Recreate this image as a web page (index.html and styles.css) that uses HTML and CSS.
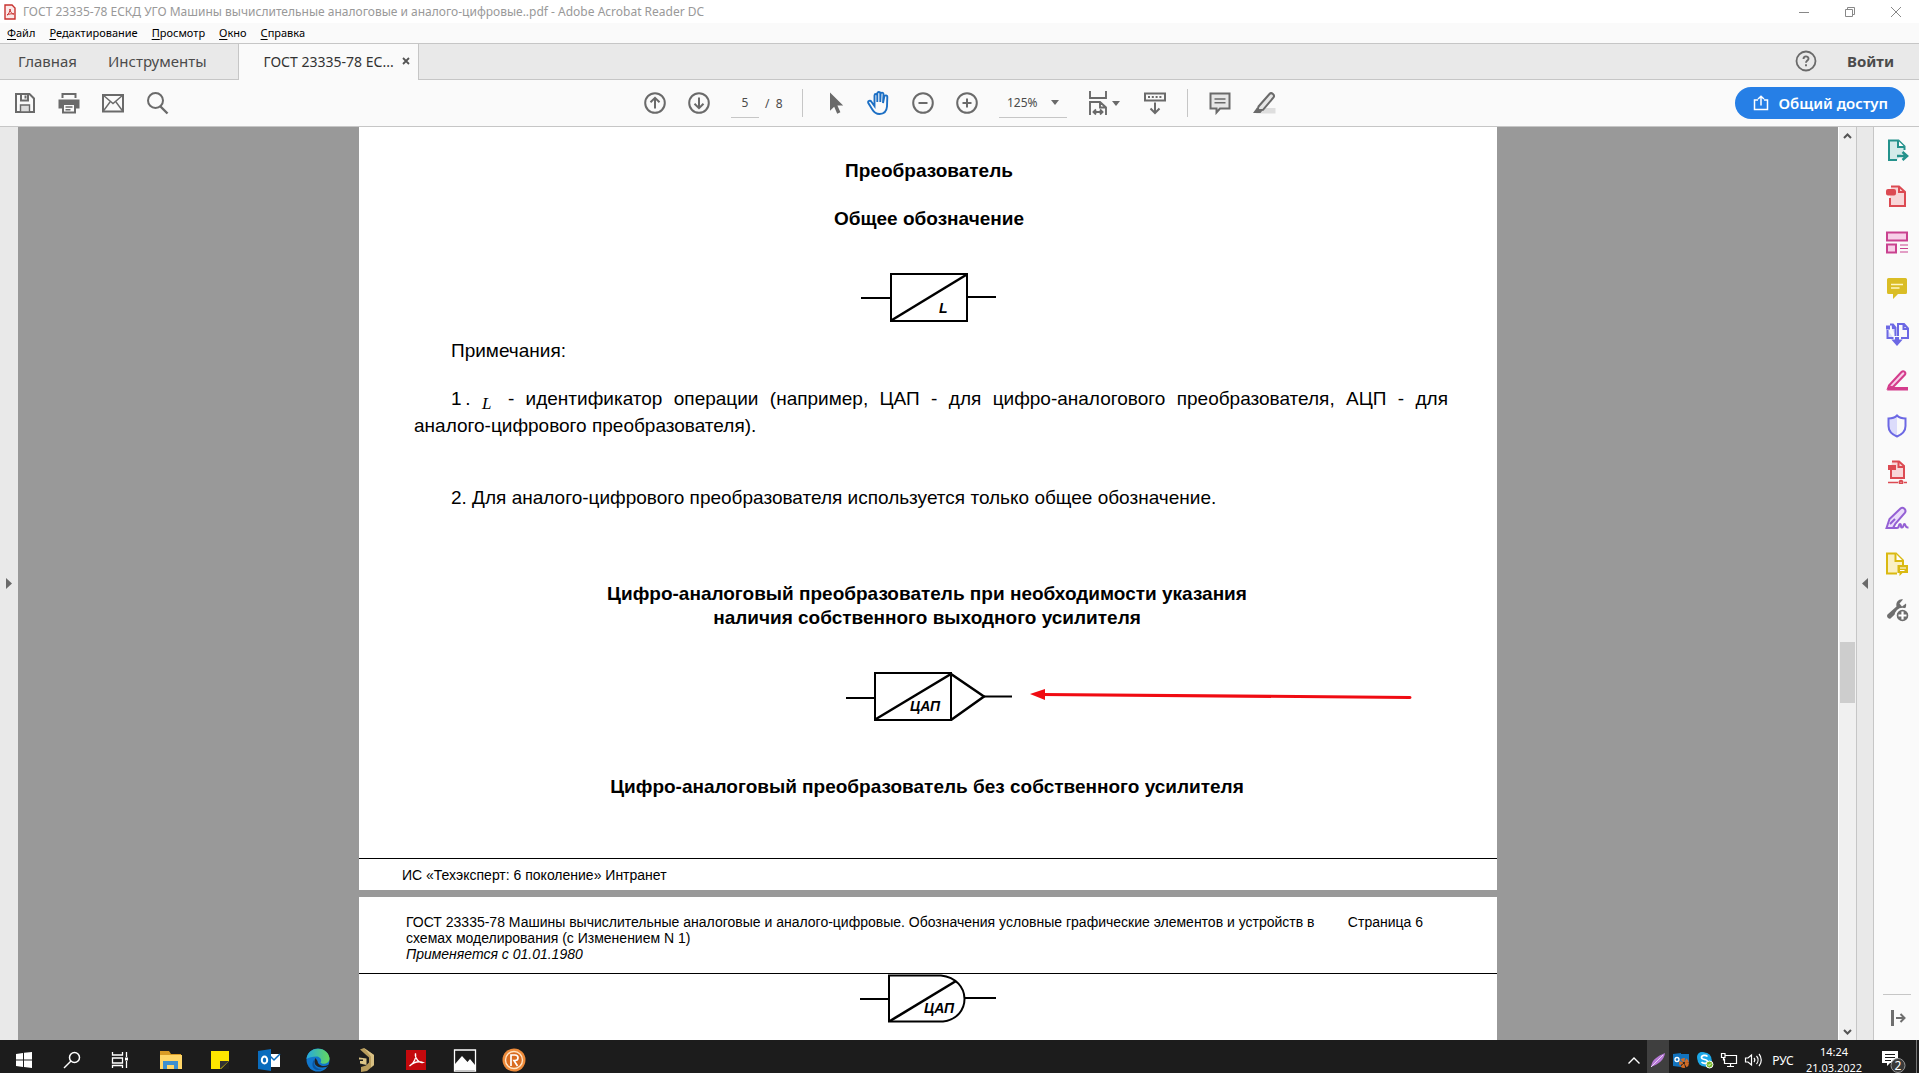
FILE: index.html
```html
<!DOCTYPE html>
<html lang="ru">
<head>
<meta charset="utf-8">
<title>ГОСТ 23335-78 - Adobe Acrobat Reader DC</title>
<link rel="stylesheet" href="styles.css">
</head>
<body>
<header class="titlebar">
  <svg class="app-icon" width="12" height="16" viewBox="0 0 12 16"><path d="M1 1h7l3 3v11H1z" fill="#fbe9e9" stroke="#c8322f" stroke-width="1.4"/><path d="M3 11c2-1 3-4 3-6 0 3 2 5 4 5-3-.5-5 0-7 1z" fill="none" stroke="#c8322f"/></svg>
  <h1 class="title">ГОСТ 23335-78 ЕСКД УГО Машины вычислительные аналоговые и аналого-цифровые..pdf - Adobe Acrobat Reader DC</h1>
  <div class="window-buttons">
    <button aria-label="Свернуть"><svg width="12" height="12" viewBox="0 0 12 12"><path d="M1 6.5h10"/></svg></button>
    <button aria-label="Восстановить"><svg width="12" height="12" viewBox="0 0 12 12"><path d="M1.500 3.500h7v7h-7zM3.500 3.500v-2h7v7h-2"/></svg></button>
    <button aria-label="Закрыть"><svg width="12" height="12" viewBox="0 0 12 12"><path d="M1 1l10 10M11 1L1 11"/></svg></button>
  </div>
</header>
<nav class="menubar">
  <button><u>Ф</u>айл</button>
  <button><u>Р</u>едактирование</button>
  <button><u>П</u>росмотр</button>
  <button><u>О</u>кно</button>
  <button><u>С</u>правка</button>
</nav>
<nav class="tabs">
  <button class="tab">Главная</button>
  <button class="tab tab-tools">Инструменты</button>
  <div class="tab-doc"><button class="tab-name">ГОСТ 23335-78 ЕС...</button><button class="tab-close" aria-label="Закрыть вкладку"><svg width="8" height="8" viewBox="0 0 8 8"><path d="M1 1l6 6M7 1L1 7" stroke="#555" stroke-width="1.800"/></svg></button></div>
  <button class="help" aria-label="Справка"><svg width="22" height="22" viewBox="0 0 22 22"><circle cx="11" cy="11" r="9.500" fill="none" stroke="#6a6a6a" stroke-width="1.800"/><path d="M8.500 9c0-3.500 5-3.300 5-.3 0 1.800-2.500 2-2.500 4.100M11 14.300v2" fill="none" stroke="#6a6a6a" stroke-width="1.900"/></svg></button>
  <button class="login">Войти</button>
</nav>
<div class="toolbar">
  <div class="tools">
    <button class="tool" aria-label="Сохранить"><svg viewBox="0 0 24 24"><path d="M3 3h13.500L21 7.500V21H3z"/><path d="M8 3v6.500h7V3M12.500 4.500v3"/><path d="M7.500 21v-7h9v7z" fill="#ddd" stroke-width="1.400"/></svg></button>
    <button class="tool" aria-label="Печать"><svg viewBox="0 0 24 24"><path d="M5.500 7V3h13v4"/><path d="M1.500 8.500h21v9h-21z" fill="#6a6a6a" stroke="none"/><path d="M6 13h12v8.500H6z" fill="#fbfbfb"/><path d="M8.500 16h7M8.500 18.700h5" stroke-width="1.400"/></svg></button>
    <button class="tool" aria-label="Отправить"><svg viewBox="0 0 24 24"><path d="M2 4h20v16.500H2z"/><path d="M2 4l10 8.500L22 4M2 20.500l7-9.500M22 20.500L15 11" stroke-width="1.400"/></svg></button>
    <button class="tool" aria-label="Найти"><svg viewBox="0 0 24 24"><circle cx="10.500" cy="9.500" r="7.500"/><path d="M15.500 15.500l7 7" stroke-width="2.400"/></svg></button>
  </div>
  <div class="tools center">
    <button class="tool" aria-label="Предыдущая страница"><svg viewBox="0 0 24 24"><circle cx="12" cy="12" r="9.800"/><path d="M12 17.500V7M7.500 11.300L12 6.800l4.500 4.500"/></svg></button>
    <button class="tool" aria-label="Следующая страница"><svg viewBox="0 0 24 24"><circle cx="12" cy="12" r="9.800"/><path d="M12 6.500V17M7.500 12.700l4.500 4.500 4.500-4.500"/></svg></button>
    <input class="page-no" type="text" value="5" aria-label="Номер страницы">
    <span class="page-count">/&nbsp; 8</span>
    <span class="divider"></span>
    <button class="tool" aria-label="Выделение"><svg viewBox="0 0 24 24"><path d="M7 1.500v18.300l4.200-4 3 6.900 3.200-1.500-3-6.700h5.800z" fill="#6a6a6a" stroke="none"/></svg></button>
    <button class="tool hand" aria-label="Рука"><svg viewBox="0 0 24 24"><path d="M7.500 13V4.500c0-2 2.800-2 2.800 0V11 2.500c0-2 3-2 3 0V11l.3-8c.2-2 3-1.800 2.900.2L16 12l1.300-6.500c.6-1.800 3.300-1.300 3 .7L20 15.500c-.4 5-3.500 7.500-7.500 7.500-3.500 0-5.500-1.500-7.500-5L1.300 12c-.8-2 1.800-3 3.100-1.300L7.500 15z" stroke-width="1.900"/></svg></button>
    <button class="tool" aria-label="Уменьшить"><svg viewBox="0 0 24 24"><circle cx="12" cy="12" r="9.800"/><path d="M7.500 12h9"/></svg></button>
    <button class="tool" aria-label="Увеличить"><svg viewBox="0 0 24 24"><circle cx="12" cy="12" r="9.800"/><path d="M7.500 12h9M12 7.500v9"/></svg></button>
    <div class="zoom"><select aria-label="Масштаб"><option>125%</option></select><svg width="8" height="5" viewBox="0 0 8 5"><path d="M0 0h8L4 5z" fill="#6a6a6a"/></svg></div>
    <button class="tool fit" aria-label="По ширине"><svg viewBox="0 0 24 24"><path d="M4 0v7h16V0M4 24V11h10l6 5.500V24M14 11v5.500h6M8 21h8M10 18.500L7.500 21l2.500 2.500M14 18.500l2.500 2.500-2.500 2.500" stroke-width="1.900"/></svg><svg class="caret" viewBox="0 0 8 5"><path d="M0 0h8L4 5z" fill="#6a6a6a" stroke="none"/></svg></button>
    <button class="tool" aria-label="Прокрутка"><svg viewBox="0 0 24 24"><path d="M2 2.500h20v7H2z"/><path d="M5 6h14" stroke-dasharray="2 1.800"/><path d="M12 11.500v10M7.500 17.500L12 22l4.500-4.500"/></svg></button>
    <span class="divider"></span>
    <button class="tool" aria-label="Комментарий"><svg viewBox="0 0 24 24"><path d="M2.500 2.500h19v15H12L8.500 21.500v-4h-6z" fill="#e6e6e6"/><path d="M6.500 8h11M6.500 11.800h11" stroke-width="1.500"/></svg></button>
    <button class="tool" aria-label="Выделить текст"><svg viewBox="0 0 24 24"><path d="M8 17h15.500v5.500H4z" fill="#dedede" stroke="none"/><path d="M6.500 15.500L17.500 3c2-2.200 5.800 1 4 3.500L11 18.800l-5.500.7z" fill="#e6e6e6"/><path d="M1 22l4-5.500 5 3.500-1.500 2z" fill="#6a6a6a" stroke="none"/></svg></button>
  </div>
  <button class="share"><svg width="16" height="16" viewBox="0 0 16 16"><path d="M5 5H1.500v9.500h13V5H11M8 10.500V1.500M5 4l3-2.800L11 4" fill="none" stroke="#fff" stroke-width="1.500"/></svg>Общий доступ</button>
</div>
<main class="workspace">
  <button class="rail rail-left" aria-label="Открыть панель навигации"><svg width="6" height="11" viewBox="0 0 6 11"><path d="M0 0v11l6-5.500z" fill="#6a6a6a"/></svg></button>
  <div class="canvas">
    <article class="page first">
      <div class="content">
        <h2>Преобразователь</h2>
        <h2>Общее обозначение</h2>
        <figure><svg width="136" height="52" viewBox="0 0 136 52"><path d="M30 2h76v47H30zM0 26h30M106 25h29"/><path d="M31 48L105 3" stroke-width="2.600"/><text x="78" y="41" font-size="14">L</text></svg></figure>
        <p class="lead">Примечания:</p>
        <p>1&thinsp;. <i class="var">L</i> - идентификатор операции (например, ЦАП - для цифро-аналогового преобразователя, АЦП - для <span class="whole">аналого-цифрового</span> преобразователя).</p>
        <p class="second">2. Для аналого-цифрового преобразователя используется только общее обозначение.</p>
        <h2 class="wide">Цифро-аналоговый преобразователь при необходимости указания<br>наличия собственного выходного усилителя</h2>
        <figure class="amp"><svg width="166" height="52" viewBox="0 0 166 52"><path d="M29 2h76v47H29zM0 27h29M138 25.500h28"/><path d="M30 48L105 3l33 22.500L105 49" stroke-width="2.500"/><text x="64" y="40" font-size="14">ЦАП</text></svg>
          <svg class="pointer" width="382" height="12" viewBox="0 0 382 12"><path d="M12 5.500L380 8.500" stroke="#f00b12" stroke-width="3" stroke-linecap="round"/><path d="M0 5L15 0v11z" fill="#f00b12" stroke="none"/></svg>
        </figure>
        <h2 class="wide">Цифро-аналоговый преобразователь без собственного усилителя</h2>
      </div>
      <footer class="page-foot">ИС «Техэксперт: 6 поколение» Интранет</footer>
    </article>
    <article class="page">
      <header class="page-head">
        <p>ГОСТ 23335-78 Машины вычислительные аналоговые и аналого-цифровые. Обозначения условные графические элементов и устройств в<br>схемах моделирования (с Изменением N 1)<br><i>Применяется с 01.01.1980</i></p>
        <p>Страница 6</p>
      </header>
      <figure class="half"><svg width="136" height="50" viewBox="0 0 136 50"><path d="M29 1.500h52C112 5 112 44 83 47.500H29zM0 25h29M105 24h31"/><path d="M30 47L96 7" stroke-width="2.600"/><text x="64" y="39" font-size="14">ЦАП</text></svg></figure>
    </article>
  </div>
  <div class="scrollbar">
    <svg width="9" height="6" viewBox="0 0 9 6"><path d="M1 5l3.500-3.500L8 5" fill="none" stroke="#555" stroke-width="2"/></svg>
    <div class="track"><div class="thumb"></div></div>
    <svg width="9" height="6" viewBox="0 0 9 6"><path d="M1 1l3.500 3.500L8 1" fill="none" stroke="#555" stroke-width="2"/></svg>
  </div>
  <button class="rail rail-right" aria-label="Скрыть панель инструментов"><svg width="6" height="11" viewBox="0 0 6 11"><path d="M6 0v11L0 5.500z" fill="#6a6a6a"/></svg></button>
  <aside class="panel">
    <button aria-label="Экспорт PDF"><svg viewBox="0 0 24 24" stroke="#24928c"><path d="M12 22H4V2.500h9.500l6 6V12" fill="#d3ebe9"/><path d="M13 2.500V9h6.500" fill="#fff"/><path d="M12 18h8M17.500 14l4.500 4-4.500 4" stroke-width="2.600"/></svg></button>
    <button aria-label="Создать PDF"><svg viewBox="0 0 24 24" stroke="#dc4a52"><path d="M5 14v8h15V8l-6-5.500H6" fill="#f8d6d8"/><path d="M14 2.500V8h6"/><rect x="2" y="6" width="8" height="4.500" rx="1" fill="#dc4a52"/></svg></button>
    <button aria-label="Систематизировать"><svg viewBox="0 0 24 24" stroke="#c9428f"><path d="M2 2.500h20v8H2zM2 14.500h9v8H2z" fill="#f8cfe8"/><path d="M15 15h8M15 18.500h8M15 22h8" stroke-width="1.200"/></svg></button>
    <button aria-label="Комментарий"><svg viewBox="0 0 24 24" stroke="none"><path d="M3.500 2h17a1.500 1.500 0 0 1 1.500 1.500v13a1.500 1.500 0 0 1-1.500 1.500H13l-5 5v-5H3.500A1.500 1.500 0 0 1 2 16.500v-13A1.500 1.500 0 0 1 3.500 2z" fill="#dabd25"/><path d="M6 8.500h12M6 12h8.500" stroke="#fff6c4" stroke-width="1.500"/></svg></button>
    <button aria-label="Объединить файлы"><svg viewBox="0 0 24 24" stroke="#6c68e4" stroke-width="1.800"><path d="M2.500 8v8h6M10.500 14V5.500L8 2.500H5" fill="#dcdcfb"/><path d="M16 16h7V6.500L19 2h-6v12M18.500 2v5H23M8 2.500V6h2"/><path d="M1 5.500h4" stroke-width="4"/><path d="M12 15v3" stroke-width="4"/><path d="M8.500 18.500h7L12 22.500z" fill="#6c68e4"/></svg></button>
    <button aria-label="Редактировать"><svg viewBox="0 0 24 24" stroke="#d43c8c"><path d="M4 17.500L16.500 4c2-2 5 .5 3.300 2.800L8 19l-5 1.500z" fill="#f8cfe8"/><path d="M2 22.500l3-5 4 1.500h14v3.500z" fill="#d43c8c" stroke="none"/></svg></button>
    <button aria-label="Защитить"><svg viewBox="0 0 24 24" stroke="#6c68e4"><path d="M12 2v20.500C6 20 3.500 16.500 3.500 12V4.500C7 4.500 10 3.500 12 1.500z" fill="#dcdcfb" stroke="none"/><path d="M12 1.500c2 2 5 3 8.500 3V12c0 4.500-2.500 8-8.500 10.500C6 20 3.500 16.500 3.500 12V4.500C7 4.500 10 3.500 12 1.500z"/></svg></button>
    <button aria-label="Сжать PDF"><svg viewBox="0 0 24 24" stroke="#dc4a52"><path d="M6 10v8h13V6l-5-4.500H7" fill="#f8d6d8"/><path d="M13.500 1.500V7H19"/><rect x="4" y="6" width="6" height="3" fill="#dc4a52"/><path d="M3 22.500h10M19 22.500h3" stroke-width="1.600"/><circle cx="16" cy="22.300" r="1.500"/></svg></button>
    <button aria-label="Заполнить и подписать"><svg viewBox="0 0 24 24" stroke="#9460d4"><path d="M1.500 22l3-9L15.500 2.500c2.500-2 6.500 1.500 4.300 4.300L10.500 17.500 8 22z" fill="#eadcfa"/><path d="M1.500 22H12c3 0 1-4 3-4s0 4 2 3.500 1-3.500 2.500-3.500 0 4 4 3.500M5 18l5-5"/></svg></button>
    <button aria-label="Отправить на рецензирование"><svg viewBox="0 0 24 24" stroke="#dab911"><path d="M12 21.500H2v-20h9l7 7V13" fill="#faf0c4"/><path d="M10.500 1.500V9H18" fill="#fff"/><path d="M12.500 13H23v8h-5.500l-3 3v-3h-2z" fill="#dab911" stroke="none"/><path d="M15 16h6M15 18.500h4.500" stroke="#fff" stroke-width="1.200"/></svg></button>
    <button aria-label="Другие инструменты"><svg viewBox="0 0 24 24" stroke="none"><path d="M2.500 16.500l9-8c-1-5 3-8 6.500-7l-3.500 4 2.500 3 4-3c1 4-2 7.500-6.500 6.500l-9 8.500c-2 1-4.500-2-3-4z" fill="#6e6e6e"/><circle cx="17.500" cy="17.500" r="6.800" fill="#6e6e6e" stroke="#fafafa"/><path d="M17.500 13.500v8M13.500 17.500h8" stroke="#fff" stroke-width="2.200"/></svg></button>
    <button class="collapse" aria-label="Развернуть панель"><svg viewBox="0 0 24 24" stroke="#6e6e6e"><path d="M7.500 4v16" stroke-width="3"/><path d="M11 12h8M15.500 8l4 4-4 4"/></svg></button>
  </aside>
</main>
<footer class="taskbar">
  <div class="taskrow">
    <button aria-label="Пуск"><svg width="24" height="24" viewBox="0 0 24 24" fill="#fff"><path d="M4 6l7-1v6.500H4zM12 4.800L20 4v7.500h-8zM4 12.500h7V19l-7-1zM12 12.500h8V20l-8-1z"/></svg></button>
    <button aria-label="Поиск"><svg width="24" height="24" viewBox="0 0 24 24" fill="none" stroke="#fff" stroke-width="1.500"><circle cx="14.500" cy="9.500" r="5"/><path d="M11 13l-7 7"/></svg></button>
    <button aria-label="Представление задач"><svg width="24" height="24" viewBox="0 0 24 24" fill="none" stroke="#fff" stroke-width="1.300"><path d="M4.500 4v3h10V4M4.500 10h10v5h-10zM4.500 20v-2.500h10V20M18.500 4v5M18.500 13v7"/><path d="M17 11h3" stroke-width="3"/></svg></button>
    <div class="apps">
      <button aria-label="Проводник"><svg width="24" height="24" viewBox="0 0 24 24"><path d="M1 3h9l2 3h10v15H1z" fill="#d99b25"/><path d="M1 7h22v14H1z" fill="#ffd668"/><path d="M4 21v-8h15v8h-4v-4H8v4z" fill="#3c8fd0"/></svg></button>
      <button aria-label="Заметки"><svg width="24" height="24" viewBox="0 0 24 24"><path d="M3 3h18v18H3z" fill="#ffe500"/><path d="M21 13v8h-8z" fill="#222"/><path d="M12 21v-8h9z" fill="#333"/></svg></button>
      <button aria-label="Outlook"><svg width="24" height="24" viewBox="0 0 24 24"><path d="M12 6h11v13H12z" fill="#fff"/><path d="M12 7l5 5 6-6" fill="none" stroke="#0a6cbd" stroke-width="1.500"/><path d="M1 3l13-2v22L1 21z" fill="#0a6cbd"/><ellipse cx="7.500" cy="12" rx="2.700" ry="3.500" fill="none" stroke="#fff" stroke-width="2"/></svg></button>
      <button aria-label="Edge"><svg width="24" height="24" viewBox="0 0 24 24"><defs><linearGradient id="edge"><stop offset="0" stop-color="#25a8e0"/><stop offset="1" stop-color="#65d85a"/></linearGradient></defs><circle cx="12" cy="12" r="11.500" fill="#1176cc"/><path d="M.5 11C2-3 22-2 23.500 10c.5 6-7 7-9 4.500 2-3-1-6-4-6-4 0-8 1-10 2.500z" fill="url(#edge)"/><path d="M9.500 10c-3 6 1 11 11 9 1-.5 2-1.500 1.500-2-4 2-10 1-10.500-4z" fill="#222"/><path d="M9.500 10c-4 5 0 12 7 11-8 4-14-4-7-11z" fill="#0b55a0"/></svg></button>
      <button aria-label="Altium"><svg width="24" height="24" viewBox="0 0 24 24"><path d="M5 1.500L9 0l10 7v10l-7 6-6 1v-5l5-1.500 3-3V9.500z" fill="#b89c5c"/><path d="M4 9.500l7.500 1V17L5 15.500V13h3v-1.500H4z" fill="#dcc587"/><path d="M9 0l10 7v10l-3 2.500V8.500z" fill="#d8c083"/></svg></button>
      <button aria-label="Acrobat"><svg width="24" height="24" viewBox="0 0 24 24"><path d="M2 2h20v20H2z" fill="#c4090d"/><path d="M5.500 18c5-3 7-9 6-12.500-1 5 4 10 7.500 9-4-1.500-9-.5-13.500 3.500z" fill="none" stroke="#fff" stroke-width="1.300"/></svg></button>
      <button aria-label="Фотографии"><svg width="24" height="24" viewBox="0 0 24 24"><path d="M1.500 2h21v21h-21z" fill="#1b1b1b" stroke="#fff" stroke-width="1.300"/><path d="M2 22V16l7-8 5.500 6L17 11l5 6v5z" fill="#fff"/></svg></button>
      <button aria-label="Rutoken"><svg width="24" height="24" viewBox="0 0 24 24"><circle cx="12" cy="12" r="11.500" fill="#ee8b3a"/><circle cx="12" cy="12" r="8.500" fill="#d96c20" stroke="#ffe4c4" stroke-width="1.400"/><path d="M9 18V7h4c4 0 4 5.500 0 5.500h-1l3.500 5.500" fill="none" stroke="#fff" stroke-width="1.700"/></svg></button>
    </div>
    <div class="tray">
      <button aria-label="Скрытые значки"><svg width="14" height="9" viewBox="0 0 14 9"><path d="M1.500 7.500L7 2l5.500 5.500" fill="none" stroke="#fff" stroke-width="1.400"/></svg></button>
      <button class="active" aria-label="Перо"><svg width="16" height="16" viewBox="0 0 16 16"><path d="M1 15C2 7 8 4 15 1c-1 7-6 11-14 14z" fill="#b77ad6"/><path d="M1 15L13 3" stroke="#ead1f6"/></svg></button>
      <button aria-label="Почта"><svg width="18" height="18" viewBox="0 0 18 18"><path d="M1 3l8-1v14l-8-1zM9 3h8v8H9z" fill="#1273be"/><circle cx="5" cy="8.500" r="2" fill="none" stroke="#fff" stroke-width="1.400"/><circle cx="12" cy="12" r="3" fill="none" stroke="#d06c28" stroke-width="4" stroke-dasharray="3 .8"/></svg></button>
      <button aria-label="Skype"><svg width="18" height="18" viewBox="0 0 18 18"><circle cx="6" cy="6" r="5" fill="#1ca8e8"/><circle cx="11" cy="11" r="5" fill="#1ca8e8"/><circle cx="8.500" cy="8.500" r="7" fill="#1ca8e8"/><path d="M11.500 5.500c-2-2-6-1.200-6 1 0 2.600 6 1.500 6 4 0 2-4 2.500-6 .5" fill="none" stroke="#fff" stroke-width="1.700"/><circle cx="13.500" cy="13.500" r="3.500" fill="#76b82a" stroke="#fff"/><path d="M12 13.500l1 1 2-2" fill="none" stroke="#fff"/></svg></button>
      <button aria-label="Сеть"><svg width="18" height="16" viewBox="0 0 18 16" fill="none" stroke="#fff" stroke-width="1.200"><path d="M5 3.500h11.500v8H4.500v-5M10.500 11.500v3M7 14.500h7M1.500 1.500h3.500v4H1.500zM3.500 5.500v3"/></svg></button>
      <button aria-label="Громкость"><svg width="18" height="16" viewBox="0 0 18 16" fill="none" stroke="#fff" stroke-width="1.200"><path d="M1.500 6v4h2.500l3.500 3V3L4 6zM10 6c1 1.200 1 2.800 0 4M12.500 4c2 2.300 2 5.700 0 8M15 2c3 3.500 3 8.500 0 12"/></svg></button>
      <button class="lang">РУС</button>
      <button class="clock"><time>14:24</time><time>21.03.2022</time></button>
      <button class="notes" aria-label="Уведомления"><svg width="26" height="26" viewBox="0 0 26 26"><path d="M1 4h16v12H9l-3 3v-3H1z" fill="#fff"/><path d="M4 7.500h10M4 10.500h10M4 13.500h6" stroke="#1b1b1b"/><circle cx="17" cy="18.500" r="7" fill="#3a3a3a" stroke="#999"/><text x="17" y="22.500" font-size="12" text-anchor="middle" fill="#fff">2</text></svg></button>
    </div>
  </div>
</footer>
</body>
</html>
```
FILE: styles.css
```css
* { box-sizing: border-box; }
body {
  margin: 0;
  height: 100vh;
  display: flex;
  flex-direction: column;
  overflow: hidden;
  background: #fafafa;
  color: #000;
  font-family: "Noto Sans", "Open Sans", sans-serif;
  font-size: 12px;
}
button, input, select {
  font: inherit;
  color: inherit;
  border: 0;
  padding: 0;
  margin: 0;
  background: none;
}
button { flex: none; white-space: nowrap; }
svg { display: block; flex: none; }

.titlebar { flex: none; height: 23px; display: flex; align-items: center; padding-left: 4px; gap: 7px; background: #fff; }
.title { margin: 0; font-size: 12px; font-weight: 400; color: #999; white-space: nowrap; }
.window-buttons { margin-left: auto; display: flex; }
.window-buttons button { width: 46px; height: 22px; display: grid; place-items: center; }
.window-buttons svg { fill: none; stroke: #888; }

.menubar { flex: none; height: 20px; display: flex; align-items: center; gap: 14px; padding: 0 7px 2px; font-size: 11px; }
.menubar u { text-underline-offset: 2px; }

.tabs { flex: none; height: 37px; display: flex; align-items: stretch; background: #e9e9e9; border-top: 1px solid #c6c6c6; border-bottom: 1px solid #c6c6c6; font-size: 15px; color: #4b4b4b; }
.tab { padding: 0 15px 2px 18px; }
.tab-tools { padding: 0 31px 2px 16px; }
.tab-doc { display: flex; align-items: center; gap: 8px; margin-bottom: -1px; padding: 0 8px 2px 25px; background: #fafafa; border-left: 1px solid #c6c6c6; border-right: 1px solid #c6c6c6; font-size: 14px; color: #333; }
.help { margin-left: auto; padding-bottom: 2px; }
.login { font-weight: 700; padding: 0 25px 2px 30px; }

.toolbar { flex: none; height: 47px; display: grid; grid-template-columns: 1fr auto 1fr; align-items: center; border-bottom: 1px solid #c6c6c6; padding-right: 14px; }
.tools { display: flex; align-items: center; padding-left: 3px; }
.center { padding-left: 14px; color: #4b4b4b; }
.tool { width: 44px; height: 44px; display: flex; align-items: center; justify-content: center; }
.tool svg { width: 24px; height: 24px; fill: none; stroke: #6a6a6a; stroke-width: 2; }
.tool svg.caret { width: 8px; height: 5px; }
.fit { width: 53px; justify-content: flex-start; gap: 2px; padding-left: 6px; }
.hand svg { stroke: #1c6fc4; }
.page-no { width: 28px; height: 30px; margin-left: 10px; text-align: center; border-bottom: 1px solid #c6c6c6; }
.page-count { margin-left: 6px; width: 28px; }
.divider { width: 1px; height: 28px; margin: 0 10px; background: #c6c6c6; }
.page-count + .divider { margin-left: 9px; }
.zoom { width: 68px; height: 30px; margin-left: 10px; margin-right: 13px; display: flex; align-items: center; border-bottom: 1px solid #c6c6c6; padding: 0 8px; }
.zoom select { appearance: none; flex: 1; min-width: 0; }
.share { justify-self: end; height: 32px; display: flex; align-items: center; gap: 9px; padding: 0 17px 0 18px; border-radius: 16px; background: #267fe6; color: #fff; font-size: 15px; font-weight: 600; }

.workspace { flex: 1; min-height: 0; display: flex; }
.rail { width: 18px; background: #e9e9e9; display: flex; align-items: center; justify-content: center; }
.rail-right { border-left: 1px solid #c6c6c6; border-right: 1px solid #c6c6c6; }
.canvas { flex: 1; min-width: 0; overflow: hidden; background: #999; display: flex; flex-direction: column; align-items: center; gap: 7px; }
.page { flex: none; width: 100%; max-width: 1138px; background: #fff; font-family: "Liberation Sans", Arial, sans-serif; font-size: 19px; line-height: 27px; }
.content { padding: 32px 49px 35px 55px; }
.page h2 { margin: 0 0 24px; padding-right: 4px; font-size: 19px; line-height: 24px; text-align: center; }
.page h2.wide { padding-right: 8px; }
.page p { margin: 0; text-align: justify; text-indent: 37px; }
.page figure { margin: 0; display: flex; justify-content: center; position: relative; }
.page figure svg { fill: none; stroke: #000; stroke-width: 2; }
.page figure text { fill: #000; stroke: none; font-style: italic; font-weight: 700; }
.content figure { padding: 17px 5px 13px 0; }
.content .lead { margin-bottom: 21px; }
.content .second { margin: 45px 0 71px; }
.content .amp { padding: 17px 5px 52px 0; }
.pointer { position: absolute; left: 616px; top: 35px; }
.whole { white-space: nowrap; }
.var { font-family: "Liberation Serif", serif; font-size: 17px; line-height: 1px; vertical-align: -4px; margin-right: 5px; }
.page-foot { border-top: 1px solid #000; padding: 8px 43px 7px; font-size: 14px; line-height: 16px; }
.page-head { display: flex; justify-content: space-between; border-bottom: 1px solid #000; padding: 17px 74px 11px 47px; font-size: 14px; line-height: 16px; }
.page .page-head p { text-indent: 0; white-space: nowrap; }
.half { padding-bottom: 60px; }

.scrollbar { width: 18px; display: flex; flex-direction: column; align-items: center; padding: 6px 0 5px; background: #f0f0f0; border-left: 1px solid #fff; }
.track { flex: 1; width: 15px; display: grid; grid-template-rows: 503fr 62fr 325fr; margin: 2px 0; }
.thumb { grid-row: 2; background: #cdcdcd; }
.panel { width: 45px; display: flex; flex-direction: column; align-items: center; background: #fafafa; }
.panel button { height: 46px; width: 28px; display: grid; place-items: center; }
.panel svg { width: 24px; height: 24px; fill: none; stroke-width: 2; }
.panel .collapse { margin-top: auto; border-top: 1px solid #c6c6c6; }

.taskbar { flex: none; height: 33px; overflow: hidden; background: #1c1c1c; color: #fff; }
.taskrow { height: 40px; display: flex; }
.taskrow button { width: 48px; height: 40px; display: flex; align-items: center; justify-content: center; }
.apps { display: flex; margin-left: 2px; }
.apps button { width: 49px; }
.tray { display: flex; margin-left: auto; border-right: 1px solid #777; margin-right: 2px; }
.tray button { width: 24px; }
.tray .active { background: #3f3f3f; width: 22px; }
.tray button:first-child { width: 26px; }
.tray .lang { width: 36px; }
.tray .clock { width: 66px; flex-direction: column; font-size: 11px; line-height: 16px; margin-right: 5px; }
.tray .notes { width: 44px; }
.notes text { font-family: "Noto Sans", sans-serif; }
```
